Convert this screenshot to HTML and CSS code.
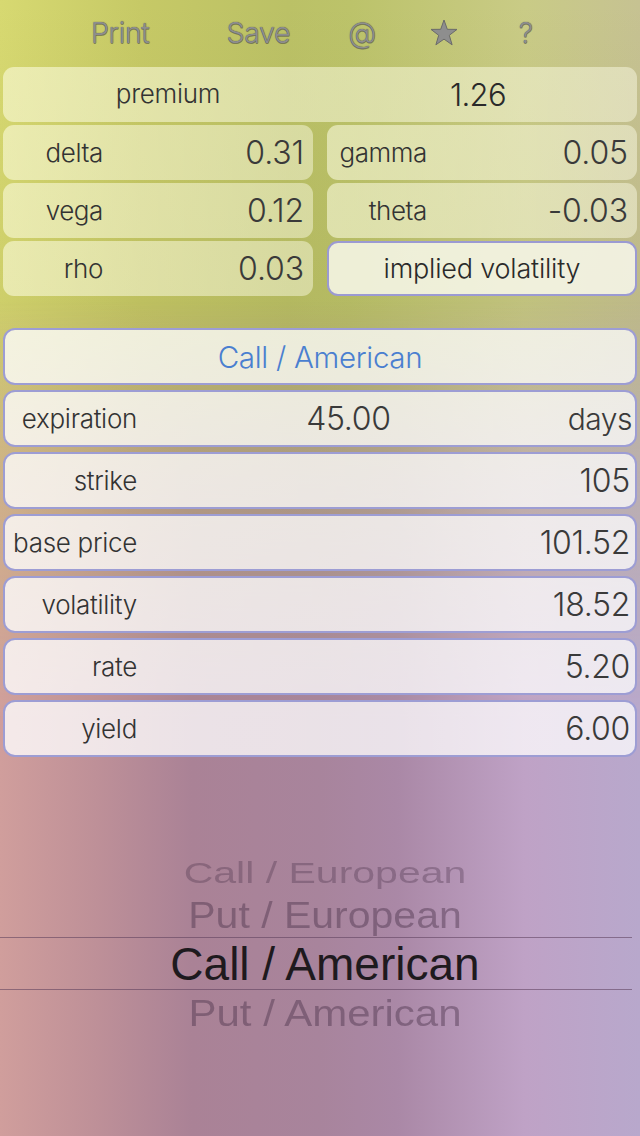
FILE: index.html
```html
<!DOCTYPE html>
<html>
<head>
<meta charset="utf-8">
<link rel="stylesheet" href="styles.css">
</head>
<body>
<div class="screen">
  <div class="toolbar">
    <span class="tool">Print</span>
    <span class="tool save">Save</span>
    <span class="tool at">@</span>
    <span class="tool star"><svg width="28" height="27" viewBox="0 0 28 27"><path d="M14 1 L17.3 10.3 L27 10.4 L19.3 16.3 L22.1 25.8 L14 20.1 L5.9 25.8 L8.7 16.3 L1 10.4 L10.7 10.3 Z" fill="#8e8e8e" stroke="#6a6a6a" stroke-width="1"/></svg></span>
    <span class="tool q">?</span>
  </div>

  <div class="greeks">
    <div class="card premium">
      <span class="p-label">premium</span>
      <span class="p-value">1.26</span>
    </div>
    <div class="grid">
      <div class="card small"><span class="lbl">delta</span><span class="val">0.31</span></div>
      <div class="card small"><span class="lbl">gamma</span><span class="val">0.05</span></div>
      <div class="card small"><span class="lbl">vega</span><span class="val">0.12</span></div>
      <div class="card small"><span class="lbl">theta</span><span class="val">-0.03</span></div>
      <div class="card small"><span class="lbl">rho</span><span class="val">0.03</span></div>
      <div class="card button">implied volatility</div>
    </div>
  </div>

  <div class="inputs">
    <div class="row type">Call / American</div>
    <div class="row"><span class="rlbl">expiration</span><span class="rmid">45.00</span><span class="unit">days</span></div>
    <div class="row"><span class="rlbl">strike</span><span class="rval">105</span></div>
    <div class="row"><span class="rlbl">base price</span><span class="rval">101.52</span></div>
    <div class="row"><span class="rlbl">volatility</span><span class="rval">18.52</span></div>
    <div class="row"><span class="rlbl">rate</span><span class="rval">5.20</span></div>
    <div class="row"><span class="rlbl">yield</span><span class="rval">6.00</span></div>
  </div>

  <div class="picker">
    <div class="pick far">Call / European</div>
    <div class="pick near">Put / European</div>
    <div class="pick selected">Call / American</div>
    <div class="pick after">Put / American</div>
  </div>
</div>
</body>
</html>
```
FILE: styles.css
```css
html, body {
  margin: 0;
  padding: 0;
}

body {
  width: 640px;
  height: 1136px;
  overflow: hidden;
  font-family: Inter, Roboto, "Liberation Sans", sans-serif;
  color: #333;
}

.screen {
  position: relative;
  isolation: isolate;
  width: 640px;
  height: 1136px;
  overflow: hidden;
  background:
    linear-gradient(to bottom, rgba(90, 80, 20, 0) 0, rgba(90, 80, 20, 0.08) 320px),
    linear-gradient(90deg, #d7d971 0%, #c6c966 22%, #bbc166 45%, #bcc36a 55%, #c9cb86 82%, #c6c292 100%);
}

.screen::before {
  content: "";
  position: absolute;
  inset: 0;
  z-index: -1;
  background: linear-gradient(90deg, #d09e9c 0%, #be9098 15%, #aa8296 30%, #a8849c 50%, #aa88a6 62%, #bfa2c6 82%, #b8a8cc 100%);
  -webkit-mask-image: linear-gradient(to bottom, transparent 300px, rgba(0,0,0,0.6) 480px, #000 720px);
  mask-image: linear-gradient(to bottom, transparent 300px, rgba(0,0,0,0.6) 480px, #000 720px);
}

/* toolbar */
.toolbar {
  height: 67px;
  display: flex;
  align-items: center;
  padding-left: 91px;
  box-sizing: border-box;
  padding-bottom: 2px;
}

.tool {
  font-family: Inter, Roboto, "Liberation Sans", sans-serif;
  font-size: 29px;
  font-weight: 300;
  letter-spacing: -0.6px;
  color: #8e8e8e;
  text-shadow: 0 0 1px #404040, 0 1px 0 rgba(70, 70, 70, 0.5);
}

.save {
  margin-left: 77px;
}

.at {
  margin-left: 58px;
}

.star {
  margin-left: 54px;
  display: flex;
  align-items: center;
  text-shadow: none;
}

.q {
  margin-left: 61px;
}

/* greeks */
.greeks {
  padding: 0 3px;
  display: flex;
  flex-direction: column;
  gap: 3px;
}

.card {
  height: 55px;
  border-radius: 11px;
  background: linear-gradient(90deg, rgba(255, 255, 230, 0.55), rgba(255, 255, 235, 0.45));
  box-sizing: border-box;
  display: flex;
  align-items: center;
}

.premium {
  display: grid;
  grid-template-columns: 1fr 1fr;
  column-gap: 14px;
}

.p-label {
  font-size: 26px;
  font-weight: 300;
  letter-spacing: -0.3px;
  text-align: center;
  padding-left: 20px;
  padding-bottom: 2px;
}

.p-value {
  font-size: 31px;
  font-weight: 300;
  letter-spacing: -0.6px;
  text-align: center;
  padding-right: 8px;
  color: #2a2a2a;
}

.grid {
  display: grid;
  grid-template-columns: 1fr 1fr;
  column-gap: 14px;
  row-gap: 3px;
}

.lbl {
  width: 100px;
  text-align: right;
  font-size: 26px;
  font-weight: 300;
  letter-spacing: -0.4px;
}

.val {
  flex: 1;
  text-align: right;
  padding-right: 9px;
  font-size: 32px;
  font-weight: 300;
  letter-spacing: -0.1px;
  color: #3a3a3a;
}

.button {
  justify-content: center;
  background: rgba(250, 250, 240, 0.82);
  border: 2px solid #9b9ad2;
  font-size: 27px;
  font-weight: 300;
  letter-spacing: -0.2px;
  color: #2a2a2a;
}

/* inputs */
.inputs {
  margin-top: 32px;
  padding: 0 3px;
  display: flex;
  flex-direction: column;
  gap: 5px;
}

.row {
  height: 57px;
  box-sizing: border-box;
  border: 2px solid #9d9dd4;
  border-radius: 12px;
  background: linear-gradient(90deg, rgba(255, 255, 255, 0.78), rgba(255, 255, 255, 0.74));
  display: flex;
  align-items: center;
}

.type {
  justify-content: center;
  font-size: 29.5px;
  font-weight: 300;
  letter-spacing: -0.3px;
  color: #4a7fd0;
}

.rlbl {
  width: 132px;
  text-align: right;
  font-size: 26px;
  font-weight: 300;
  letter-spacing: -0.3px;
  color: #333;
  white-space: nowrap;
}

.rval {
  flex: 1;
  text-align: right;
  padding-right: 5px;
  font-size: 32px;
  font-weight: 300;
  letter-spacing: -0.3px;
  color: #3a3a3a;
}

.rmid {
  flex: 1;
  text-align: center;
  font-size: 32px;
  font-weight: 300;
  letter-spacing: -0.3px;
  color: #3a3a3a;
  padding-right: 8px;
}

.unit {
  font-size: 30px;
  font-weight: 300;
  letter-spacing: -0.5px;
  padding-right: 3px;
  color: #3a3a3a;
}

/* picker */
.picker {
  margin-top: 95px;
  width: 632px;
  display: flex;
  flex-direction: column;
  font-family: "Liberation Sans", Arial, sans-serif;
}

.pick {
  display: flex;
  align-items: center;
  justify-content: center;
  white-space: nowrap;
  padding-left: 18px;
}

.far {
  height: 43px;
  font-size: 41px;
  color: rgba(70, 45, 70, 0.33);
  transform: scaleY(0.72);
}

.near {
  height: 42px;
  font-size: 41px;
  color: rgba(70, 45, 70, 0.42);
  transform: scaleY(0.88);
}

.selected {
  height: 53px;
  box-sizing: border-box;
  border-top: 1px solid rgba(90, 60, 90, 0.55);
  border-bottom: 1px solid rgba(90, 60, 90, 0.55);
  font-size: 46px;
  color: #1e1a1e;
}

.after {
  height: 46px;
  font-size: 42px;
  color: rgba(70, 45, 70, 0.42);
  transform: scaleY(0.9);
}
```
